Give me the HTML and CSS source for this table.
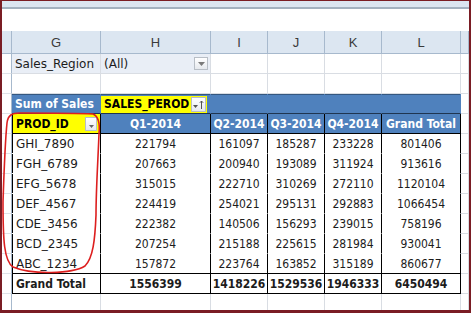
FILE: index.html
```html
<!DOCTYPE html>
<html lang="en">
<head>
    <meta charset="UTF-8">
    <title>Sales pivot</title>
    <link rel="stylesheet" href="styles.css">
</head>
<body>
    <div class="frame">
        <div class="ribbon"></div>
        <div class="formula"></div>

        <div class="sheet">
            <!-- column headers -->
            <div class="c hd corner"></div>
            <div class="c hd">G</div>
            <div class="c hd">H</div>
            <div class="c hd">I</div>
            <div class="c hd">J</div>
            <div class="c hd">K</div>
            <div class="c hd">L</div>
            <div class="c hd"></div>

            <!-- report filter -->
            <div class="c rh"></div>
            <div class="c filter">Sales_Region</div>
            <div class="c filter">(All)<span class="dd"><svg width="7" height="4" viewBox="0 0 7 4"><path d="M0 0h7L3.5 4z" fill="#7a7a7a"/></svg></span></div>
            <div class="c"></div><div class="c"></div><div class="c"></div><div class="c"></div><div class="c"></div>

            <div class="c rh"></div>
            <div class="c"></div><div class="c"></div>
            <div class="c top"></div><div class="c top"></div><div class="c top"></div><div class="c top"></div><div class="c"></div>

            <!-- pivot header -->
            <div class="c rh"></div>
            <div class="c band first">Sum of Sales</div>
            <div class="c band"><span class="yel wide">SALES_PEROD<span class="dd sort"><svg width="11" height="9" viewBox="0 0 11 9"><path d="M0 5h5L2.5 8z" fill="#555"/><path d="M8.5 9V1M6.8 2.8L8.5 1l1.7 1.8" stroke="#555" fill="none"/></svg></span></span></div>
            <div class="c band"></div><div class="c band"></div><div class="c band"></div><div class="c band last"></div>
            <div class="c"></div>

            <div class="c rh"></div>
            <div class="c pv first yellow">PROD_ID<span class="dd small"><svg width="5" height="3" viewBox="0 0 5 3"><path d="M0 0h5L2.5 3z" fill="#666"/></svg></span></div>
            <div class="c pv qh">Q1-2014</div>
            <div class="c pv qh">Q2-2014</div>
            <div class="c pv qh">Q3-2014</div>
            <div class="c pv qh">Q4-2014</div>
            <div class="c pv qh">Grand Total</div>
            <div class="c"></div>

            <div class="c rh"></div><div class="c pv first row">GHI_7890</div><div class="c pv row num">221794</div><div class="c pv row num">161097</div><div class="c pv row num">185287</div><div class="c pv row num">233228</div><div class="c pv row num">801406</div><div class="c"></div>
            <div class="c rh"></div><div class="c pv first row">FGH_6789</div><div class="c pv row num">207663</div><div class="c pv row num">200940</div><div class="c pv row num">193089</div><div class="c pv row num">311924</div><div class="c pv row num">913616</div><div class="c"></div>
            <div class="c rh"></div><div class="c pv first row">EFG_5678</div><div class="c pv row num">315015</div><div class="c pv row num">222710</div><div class="c pv row num">310269</div><div class="c pv row num">272110</div><div class="c pv row num">1120104</div><div class="c"></div>
            <div class="c rh"></div><div class="c pv first row">DEF_4567</div><div class="c pv row num">224419</div><div class="c pv row num">254021</div><div class="c pv row num">295131</div><div class="c pv row num">292883</div><div class="c pv row num">1066454</div><div class="c"></div>
            <div class="c rh"></div><div class="c pv first row">CDE_3456</div><div class="c pv row num">222382</div><div class="c pv row num">140506</div><div class="c pv row num">156293</div><div class="c pv row num">239015</div><div class="c pv row num">758196</div><div class="c"></div>
            <div class="c rh"></div><div class="c pv first row">BCD_2345</div><div class="c pv row num">207254</div><div class="c pv row num">215188</div><div class="c pv row num">225615</div><div class="c pv row num">281984</div><div class="c pv row num">930041</div><div class="c"></div>
            <div class="c rh"></div><div class="c pv first">ABC_1234</div><div class="c pv num">157872</div><div class="c pv num">223764</div><div class="c pv num">163852</div><div class="c pv num">315189</div><div class="c pv num">860677</div><div class="c"></div>

            <div class="c rh"></div><div class="c pv first total">Grand Total</div><div class="c pv num total">1556399</div><div class="c pv num total">1418226</div><div class="c pv num total">1529536</div><div class="c pv num total">1946333</div><div class="c pv num total">6450494</div><div class="c"></div>

            <div class="c rh"></div><div class="c"></div><div class="c"></div><div class="c"></div><div class="c"></div><div class="c"></div><div class="c"></div><div class="c"></div>
        </div>

        <!-- hand drawn marker round the product column -->
        <svg class="mark" width="110" height="170" viewBox="0 0 110 170">
            <path d="M93 4 C98 6 100 14 99 24 C98 50 96 80 96 105 C95 130 93 148 85 156 C72 164 32 165 13 157 C4 151 3 130 3 92 C4 62 5 32 7 13 C8 5 12 3 20 3 C45 3 75 3 93 4" fill="none" stroke="#dd1f1f" stroke-width="1.6"/>
        </svg>
    </div>
</body>
</html>
```

FILE: styles.css
```css
body {
    margin: 0;
    background: #fff;
}
.frame {
    position: relative;
    width: 471px;
    height: 313px;
    box-sizing: border-box;
    border-top: 1px solid #7a1d24;
    border-left: 2px solid #7a1d24;
    border-right: 2px solid #7a1d24;
    border-bottom: 3px solid #7a1d24;
    overflow: hidden;
    font-family: "DejaVu Sans", sans-serif;
    font-size: 12px;
    color: #1c1c1c;
}
.ribbon {
    height: 6px;
    background: #dbe5f1;
    border-bottom: 2px solid #a3b1c0;
}
.formula {
    height: 22px;
    background: #fff;
}
.sheet {
    display: grid;
    grid-template-columns: 10px 89px 110px 57px 57px 57px 79px 8px;
    grid-template-rows: 23px;
    grid-auto-rows: 20px;
}
.c {
    box-sizing: border-box;
    border-right: 1px solid #d9dde3;
    border-bottom: 1px solid #d9dde3;
    display: flex;
    align-items: center;
    white-space: nowrap;
    overflow: hidden;
    padding: 0 3px;
}
.hd {
    justify-content: center;
    background: #dce6f1;
    border-right-color: #a7b9cd;
    border-bottom-color: #a7b9cd;
    font-family: "Liberation Sans", sans-serif;
    font-size: 13px;
    color: #3a3a3a;
}
.rh {
    background: #fff;
    border-right-color: #a7b9cd;
    border-bottom-color: #dfe3e8;
}
.filter {
    background: #e9eef6;
    position: relative;
}
.dd {
    position: absolute;
    right: 2px;
    top: 3px;
    width: 14px;
    height: 13px;
    box-sizing: border-box;
    border: 1px solid #b8bec6;
    background: linear-gradient(#ffffff, #e6e9ee);
    display: flex;
    align-items: center;
    justify-content: center;
}
.band {
    background: #4f81bd;
    border-right-color: #4f81bd;
    border-bottom-color: #1f3550;
    box-shadow: inset 0 1px 0 #34577f;
    color: #fff;
    font-family: "DejaVu Sans Condensed", "DejaVu Sans", sans-serif;
    font-weight: bold;
}
.yel {
    position: relative;
    display: flex;
    align-items: center;
    height: 17px;
    margin-top: 1px;
    background: #ffff00;
    color: #000;
    padding-left: 3px;
}
.wide {
    width: 106px;
    margin-left: -3px;
    box-sizing: border-box;
}
.sort {
    top: 1px;
    right: 1px;
    width: 15px;
    height: 15px;
}
.pv {
    border-right: 1px solid #000;
    border-bottom: 1px solid #000;
    background: #fff;
}
.pv.first {
    box-shadow: inset 1px 0 0 #000;
    padding-left: 4px;
}
.pv.row {
    border-bottom-color: #fff;
}
.num {
    justify-content: center;
    font-family: "DejaVu Sans Condensed", "DejaVu Sans", sans-serif;
}
.qh {
    background: #4f81bd;
    color: #fff;
    font-family: "DejaVu Sans Condensed", "DejaVu Sans", sans-serif;
    font-weight: bold;
    justify-content: center;
    padding: 0;
}
.yellow {
    position: relative;
    background: #ffff00;
    color: #000;
    font-family: "DejaVu Sans Condensed", "DejaVu Sans", sans-serif;
    font-weight: bold;
}
.small {
    top: 3px;
    right: 3px;
    width: 12px;
    height: 14px;
    align-items: flex-end;
    padding-bottom: 2px;
}
.total {
    font-family: "DejaVu Sans Condensed", "DejaVu Sans", sans-serif;
    font-weight: bold;
}
.mark {
    position: absolute;
    left: -2px;
    top: 109px;
}
```
